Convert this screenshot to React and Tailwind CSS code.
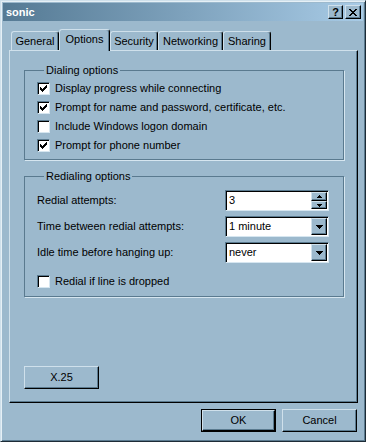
import React from 'react';

const raised = "border border-t-[#cfe0eb] border-l-[#cfe0eb] border-r-black border-b-black shadow-[inset_-1px_-1px_0_#5a7a8f]";
const sunken = "border border-t-[#5a7a8f] border-l-[#5a7a8f] border-r-[#d6e6f0] border-b-[#d6e6f0] shadow-[inset_1px_1px_0_#000]";

function Check({ checked, label }) {
  return (
    <div className="flex items-center h-[19px]">
      <div className={"w-[13px] h-[13px] bg-white flex items-center justify-center " + sunken}>
        {checked && (
          <svg width="7" height="7" viewBox="0 0 7 7" shapeRendering="crispEdges">
            <path d="M0 2h1v3h-1zM1 3h1v3h-1zM2 4h1v3h-1zM3 3h1v3h-1zM4 2h1v3h-1zM5 1h1v3h-1zM6 0h1v3h-1z" fill="#000" />
          </svg>
        )}
      </div>
      <span className="ml-[5px]">{label}</span>
    </div>
  );
}

function DownArrow() {
  return (
    <svg width="7" height="4" viewBox="0 0 7 4" shapeRendering="crispEdges">
      <path d="M0 0h7v1h-7zM1 1h5v1h-5zM2 2h3v1h-3zM3 3h1v1h-1z" fill="#000" />
    </svg>
  );
}

function Select({ value }) {
  return (
    <div className={"w-[104px] h-[21px] bg-white flex items-center " + sunken}>
      <span className="flex-1 pl-[3px]">{value}</span>
      <div className={"w-[16px] h-[17px] mr-px bg-[#9cb9cd] flex items-center justify-center " + raised}>
        <DownArrow />
      </div>
    </div>
  );
}

function Spin({ value }) {
  return (
    <div className={"w-[104px] h-[21px] bg-white flex items-center " + sunken}>
      <span className="flex-1 pl-[3px]">{value}</span>
      <div className="flex flex-col mr-px">
        <div className={"w-[16px] h-[9px] bg-[#9cb9cd] flex items-center justify-center " + raised}>
          <svg width="5" height="3" viewBox="0 0 5 3" shapeRendering="crispEdges"><path d="M2 0h1v1h-1zM1 1h3v1h-3zM0 2h5v1h-5z" fill="#000" /></svg>
        </div>
        <div className={"w-[16px] h-[8px] bg-[#9cb9cd] flex items-center justify-center " + raised}>
          <svg width="5" height="3" viewBox="0 0 5 3" shapeRendering="crispEdges"><path d="M0 0h5v1h-5zM1 1h3v1h-3zM2 2h1v1h-1z" fill="#000" /></svg>
        </div>
      </div>
    </div>
  );
}

function Tab({ label, width, selected }) {
  return (
    <div
      className={
        "flex items-center justify-center rounded-t-[3px] border border-b-0 border-t-[#cfe0eb] border-l-[#cfe0eb] border-r-black shadow-[inset_-1px_0_0_#5a7a8f] bg-[#9cb9cd] " +
        width + " " +
        (selected ? "relative z-10 h-[22px] -mb-px pb-[3px]" : "h-[19px]")
      }
    >
      {label}
    </div>
  );
}

export default function App() {
  return (
    <div
      className="w-[366px] h-[442px] bg-[#9cb9cd] flex flex-col p-[2px] border border-t-[#cfe0eb] border-l-[#cfe0eb] border-r-[#1d2c36] border-b-[#1d2c36] shadow-[inset_1px_1px_0_#e6f0f6,inset_-1px_-1px_0_#5a7a8f] text-[11px] leading-[13px] text-black"
      style={{ fontFamily: '"Liberation Sans", Arial, sans-serif' }}
    >
      <div className="h-[18px] flex items-center bg-gradient-to-r from-[#557a94] to-[#a8cbe6] pl-[3px] pr-[2px]">
        <span className="flex-1 font-bold text-white">sonic</span>
        <div className={"w-[15px] h-[14px] bg-[#9cb9cd] flex items-center justify-center font-bold text-[11px] " + raised}>?</div>
        <div className={"w-[16px] h-[14px] ml-[2px] bg-[#9cb9cd] flex items-center justify-center " + raised}>
          <svg width="8" height="7" viewBox="0 0 8 7" shapeRendering="crispEdges">
            <path d="M0 0h2v1h-2zM6 0h2v1h-2zM1 1h2v1h-2zM5 1h2v1h-2zM2 2h4v1h-4zM3 3h2v1h-2zM2 4h4v1h-4zM1 5h2v1h-2zM5 5h2v1h-2zM0 6h2v1h-2zM6 6h2v1h-2z" fill="#000" />
          </svg>
        </div>
      </div>

      <div className="flex flex-col px-[6px] mt-[8px]">
        <div className="flex items-end h-[21px] pl-[2px]">
          <Tab label="General" width="w-[48px]" />
          <Tab label="Options" width="w-[51px]" selected />
          <Tab label="Security" width="w-[48px]" />
          <Tab label="Networking" width="w-[65px]" />
          <Tab label="Sharing" width="w-[48px]" />
        </div>

        <div className={"h-[353px] w-[349px] flex flex-col px-[14px] pt-[13px] " + raised}>
          <fieldset className="border border-[#5a7a8f] shadow-[1px_1px_0_#d6e6f0] pl-[12px] pt-[2px] pb-[4px] w-[320px]">
            <legend className="ml-[7px] px-[2px]">Dialing options</legend>
            <Check checked label="Display progress while connecting" />
            <Check checked label="Prompt for name and password, certificate, etc." />
            <Check label="Include Windows logon domain" />
            <Check checked label="Prompt for phone number" />
          </fieldset>

          <fieldset className="mt-[10px] border border-[#5a7a8f] shadow-[1px_1px_0_#d6e6f0] pl-[12px] pt-[7px] pb-[5px] w-[320px]">
            <legend className="ml-[7px] px-[2px]">Redialing options</legend>
            <div className="flex flex-col gap-[5px]">
              <div className="flex items-center">
                <span className="w-[188px]">Redial attempts:</span>
                <Spin value="3" />
              </div>
              <div className="flex items-center">
                <span className="w-[188px]">Time between redial attempts:</span>
                <Select value="1 minute" />
              </div>
              <div className="flex items-center">
                <span className="w-[188px]">Idle time before hanging up:</span>
                <Select value="never" />
              </div>
            </div>
            <div className="mt-[9px]">
              <Check label="Redial if line is dropped" />
            </div>
          </fieldset>

          <button className={"mt-auto mb-[13px] w-[75px] h-[23px] bg-[#9cb9cd] flex items-center justify-center " + raised}>
            X.25
          </button>
        </div>

        <div className="flex justify-end gap-[6px] mt-[6px]">
          <button className="w-[75px] h-[23px] border border-black p-0">
            <div className={"w-full h-full bg-[#9cb9cd] flex items-center justify-center " + raised}>OK</div>
          </button>
          <button className={"w-[75px] h-[23px] bg-[#9cb9cd] flex items-center justify-center " + raised}>
            Cancel
          </button>
        </div>
      </div>
    </div>
  );
}
